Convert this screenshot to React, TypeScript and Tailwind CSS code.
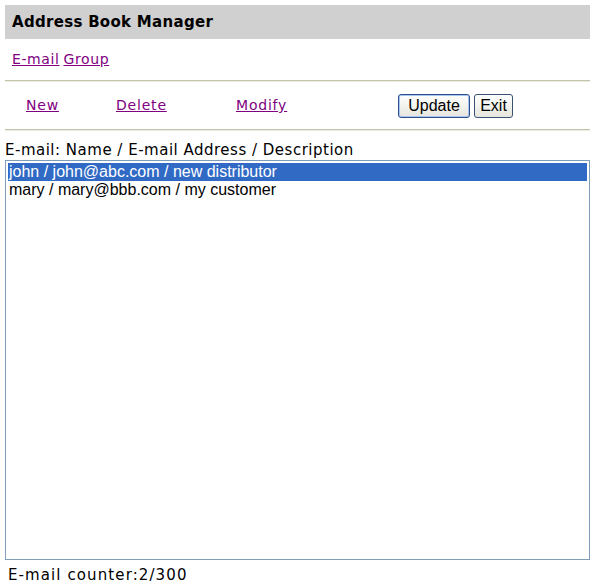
const entries = [
  { id: 1, text: "john / john@abc.com / new distributor", selected: true },
  { id: 2, text: "mary / mary@bbb.com / my customer", selected: false },
];

function Rule() {
  return <div className="mx-[5px] h-[2px] border-t border-[#c4c4ae] bg-[#ebebe2]" />;
}

function XpButton({ label, width, primary }: { label: string; width: string; primary?: boolean }) {
  return (
    <button
      className={
        "h-[24px] rounded-[3px] border bg-gradient-to-b from-white to-[#e6e6de] text-[16px] leading-none text-black [font-family:'Liberation_Sans',Arial,sans-serif] " +
        width +
        (primary
          ? " border-[#2d4f8c] shadow-[inset_0_0_0_1px_#a9c4f0]"
          : " border-[#3a5273]")
      }
    >
      {label}
    </button>
  );
}

export default function App() {
  return (
    <div className="h-[584px] w-[595px] bg-white text-[15px] text-black [font-family:'DejaVu_Sans',Verdana,sans-serif]">
      {/* title bar */}
      <div className="pt-[5px]">
        <div className="mx-[5px] flex h-[34px] items-center bg-[#d0d0d0] pl-[7px] text-[15px] font-bold tracking-[0.3px]">
          Address Book Manager
        </div>
      </div>

      {/* section links */}
      <div className="flex h-[41px] items-center gap-[4px] pl-[12px] text-[14px] tracking-[0.6px]">
        <a href="#" className="text-[#800080] underline">E-mail</a>
        <a href="#" className="text-[#800080] underline">Group</a>
      </div>

      <Rule />

      {/* actions */}
      <div className="flex h-[47px] items-center pl-[26px] text-[14px] tracking-[0.8px]">
        <div className="w-[90px]">
          <a href="#" className="text-[#800080] underline">New</a>
        </div>
        <div className="w-[120px]">
          <a href="#" className="text-[#800080] underline">Delete</a>
        </div>
        <div className="w-[162px]">
          <a href="#" className="text-[#800080] underline">Modify</a>
        </div>
        <div className="flex gap-[4px] tracking-normal">
          <XpButton label="Update" width="w-[72px]" primary />
          <XpButton label="Exit" width="w-[39px]" />
        </div>
      </div>

      <Rule />

      {/* list */}
      <div className="px-[5px] pt-[12px] leading-none tracking-[0.5px]">E-mail: Name / E-mail Address / Description</div>
      <div className="mx-[5px] mt-[2px] h-[400px] border border-[#7f9db9] bg-white p-[2px] text-[16px] leading-[18px] [font-family:'Liberation_Sans',Arial,sans-serif]">
        {entries.map((e) => (
          <div
            key={e.id}
            className={e.selected ? "bg-[#316ac5] pl-[1px] text-white" : "pl-[1px] text-black"}
          >
            {e.text}
          </div>
        ))}
      </div>

      <div className="pl-[8px] pt-[6px] text-[15px] leading-[18px] tracking-[1.1px]">E-mail counter:2/300</div>
    </div>
  );
}
